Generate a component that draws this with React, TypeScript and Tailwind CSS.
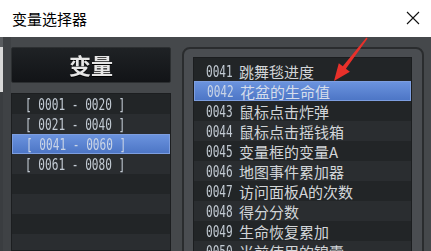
import React from "react";

const ranges = ["0001 - 0020", "0021 - 0040", "0041 - 0060", "0061 - 0080"];

const vars = [
  ["0041", "跳舞毯进度"],
  ["0042", "花盆的生命值"],
  ["0043", "鼠标点击炸弹"],
  ["0044", "鼠标点击摇钱箱"],
  ["0045", "变量框的变量A"],
  ["0046", "地图事件累加器"],
  ["0047", "访问面板A的次数"],
  ["0048", "得分分数"],
  ["0049", "生命恢复累加"],
  ["0050", "当前使用的锦囊"],
];

const cjk = { fontFamily: '"Noto Sans CJK SC", "Noto Sans", sans-serif' };
const mono = { fontFamily: '"DejaVu Sans Mono", "Liberation Mono", monospace' };

function Digits({ text }: { text: string }) {
  return (
    <span
      className="inline-block origin-left scale-x-[0.74] whitespace-pre text-[15px] leading-none"
      style={mono}
    >
      {text}
    </span>
  );
}

function rowBg(i: number, selected: boolean) {
  if (selected)
    return "bg-gradient-to-b from-[#6b93de] to-[#4d76c6] border border-[#7d9ee0]";
  return i % 2 === 0 ? "bg-[#222527]" : "bg-[#2a2d30]";
}

export default function App() {
  return (
    <div className="relative w-[431px] h-[251px] overflow-hidden bg-[#45484b] select-none">
      {/* title bar */}
      <div className="h-[37px] bg-white flex items-center justify-between pl-[12px] pr-[11px]">
        <span className="text-[15px] text-black leading-none" style={cjk}>
          变量选择器
        </span>
        <svg width="14" height="14" viewBox="0 0 14 14" className="mb-[1px]">
          <path d="M1 1L13 13M13 1L1 13" stroke="#111" strokeWidth="1.1" />
        </svg>
      </div>

      <div className="flex h-[214px]">
        {/* left edge strip */}
        <div className="w-[3px] flex flex-col">
          <div className="h-[10px] bg-[#5a5d60]" />
          <div className="h-[45px] bg-[#d9d9d9]" />
          <div className="flex-1 bg-[#3a3d40]" />
        </div>
        <div className="w-[8px] bg-[#3f4245]" />

        {/* left column */}
        <div className="w-[160px] pt-[10px] flex flex-col">
          <div className="h-[36px] rounded-[2px] border border-[#2c2f31] bg-gradient-to-b from-[#1f2225] to-[#121417] flex items-center justify-center">
            <span
              className="text-[22px] font-bold text-[#e6e6e6] leading-none mb-[3px] drop-shadow-[0_1px_0_#000]"
              style={cjk}
            >
              变量
            </span>
          </div>
          <div className="mt-[10px] flex-1 border border-[#1c1e20] overflow-hidden">
            {Array.from({ length: 8 }).map((_, i) => (
              <div
                key={i}
                className={`h-[20px] flex items-center pl-[13px] ${rowBg(i, i === 2)}`}
              >
                {ranges[i] && (
                  <span className={i === 2 ? "text-[#c9d4e6]" : "text-[#c3cbd4]"}>
                    <Digits text={`[ ${ranges[i]} ]`} />
                  </span>
                )}
              </div>
            ))}
          </div>
        </div>

        {/* right panel */}
        <div className="ml-[11px] mt-[10px] w-[242px] h-[220px] rounded-[8px] border-2 border-[#2a2c2e] bg-[#4a4d51] pt-[8px] pl-[9px] pr-[10px]">
          <div className="h-full border border-[#1b1d1f] bg-[#222527] pt-[3px] overflow-hidden">
            {vars.map(([n, name], i) => {
              const sel = i === 1;
              return (
                <div
                  key={n}
                  className={`h-[20px] flex items-center pl-[12px] ${rowBg(i, sel)}`}
                >
                  <span className={`w-[33px] ${sel ? "text-[#c9d4e6]" : "text-[#c3cbd4]"}`}>
                    <Digits text={n} />
                  </span>
                  <span
                    className={`text-[15px] leading-none ${sel ? "text-[#d5ddeb]" : "text-[#d2d5d8]"}`}
                    style={cjk}
                  >
                    {name}
                  </span>
                </div>
              );
            })}
          </div>
        </div>
      </div>

      {/* red annotation arrow */}
      <svg className="absolute left-0 top-0 pointer-events-none" width="431" height="251">
        <polygon
          points="334,81 349.9,71.8 345.9,68.7 367.6,38.5 366.4,37.5 342.8,66.3 338.8,63.2"
          fill="#e8302a"
        />
      </svg>
    </div>
  );
}
